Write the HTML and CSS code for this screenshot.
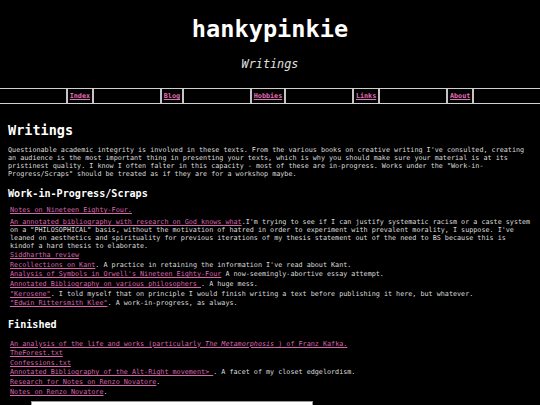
FILE: index.html
```html
<!DOCTYPE html>
<html lang="en">
<head>
<meta charset="utf-8">
<title>hankypinkie - Writings</title>
<link rel="stylesheet" href="styles.css">
</head>
<body>
<header class="site-header">
  <h1 class="site-title">hankypinkie</h1>
  <p class="site-subtitle">Writings</p>
</header>
<nav class="nav">
  <span class="nav-gap"></span>
  <span class="nav-cell"><a href="#">Index</a></span>
  <span class="nav-gap"></span>
  <span class="nav-cell"><a href="#">Blog</a></span>
  <span class="nav-gap"></span>
  <span class="nav-cell"><a href="#">Hobbies</a></span>
  <span class="nav-gap"></span>
  <span class="nav-cell"><a href="#">Links</a></span>
  <span class="nav-gap"></span>
  <span class="nav-cell"><a href="#">About</a></span>
  <span class="nav-gap"></span>
</nav>
<main class="content">
  <h2 class="page-title">Writings</h2>
  <p class="intro">Questionable academic integrity is involved in these texts. From the various books on creative writing I've consulted, creating an audience is the most important thing in presenting your texts, which is why you should make sure your material is at its pristinest quality. I know I often falter in this capacity - most of these are in-progress. Works under the "Work-in-Progress/Scraps" should be treated as if they are for a workshop maybe.</p>

  <h3 class="section-title">Work-in-Progress/Scraps</h3>
  <ul class="works">
    <li class="first"><a href="#">Notes on Nineteen Eighty-Four.</a></li>
    <li><a href="#">An annotated bibliography with research on God knows what</a>.I'm trying to see if I can justify systematic racism or a caste system on a "PHILOSOPHICAL" basis, without the motivation of hatred in order to experiment with prevalent morality, I suppose. I've leaned on aesthetics and spirituality for previous iterations of my thesis statement out of the need to BS because this is kindof a hard thesis to elaborate.</li>
    <li><a href="#">Siddhartha review</a></li>
    <li><a href="#">Recollections on Kant</a>. A practice in retaining the information I've read about Kant.</li>
    <li><a href="#">Analysis of Symbols in Orwell's Nineteen Eighty-Four</a> A now-seemingly-abortive essay attempt.</li>
    <li><a href="#">Annotated Bibliography on various philosophers </a>. A huge mess.</li>
    <li><a href="#">"Kerosene"</a>. I told myself that on principle I would finish writing a text before publishing it here, but whatever.</li>
    <li><a href="#">"Edwin Rittersmith Klee"</a>. A work-in-progress, as always.</li>
  </ul>

  <h3 class="section-title finished">Finished</h3>
  <ul class="works done">
    <li><a href="#">An analysis of the life and works (particularly <i>The Metamorphosis</i> ) of Franz Kafka.</a></li>
    <li><a href="#">TheForest.txt</a></li>
    <li><a href="#">Confessions.txt</a></li>
    <li><a href="#">Annotated Bibliography of the Alt-Right movement&gt; </a>. A facet of my closet edgelordism.</li>
    <li><a href="#">Research for Notes on Renzo Novatore</a>.</li>
    <li><a href="#">Notes on Renzo Novatore</a>.</li>
  </ul>
  <div class="frame"></div>
</main>
</body>
</html>
```
FILE: styles.css
```css
html, body {
  margin: 0;
  padding: 0;
  background: #000;
}

body {
  font-family: "DejaVu Sans Mono", "Liberation Mono", monospace;
  font-size: 6.75px;
  color: #dcdcdc;
}

a {
  color: #d865ad;
}

.site-header {
  text-align: center;
  padding-top: 16.4px;
}

.site-title {
  margin: 0;
  font-size: 23.6px;
  line-height: 27.5px;
  font-weight: bold;
  color: #fff;
}

.site-subtitle {
  margin: 14.45px 0 0;
  font-size: 11.8px;
  line-height: 13.7px;
  font-style: italic;
  color: #e0e0e0;
}

.nav {
  display: flex;
  margin-top: 16px;
  height: 16px;
  box-sizing: border-box;
  border-top: 1px solid #cfcfcf;
  border-bottom: 1px solid #cfcfcf;
}

.nav-gap {
  flex: 1;
}

.nav-cell {
  flex: none;
  display: flex;
  align-items: center;
  padding: 0 2px;
  border-left: 2px solid #c4c4c4;
  border-right: 2px solid #c4c4c4;
}

.nav-cell a {
  font-weight: bold;
  color: #e070b8;
  line-height: 8px;
}

.content {
  padding: 0 8px;
}

.page-title {
  margin: 18.5px 0 0;
  font-size: 13.5px;
  line-height: 15.7px;
  font-weight: bold;
  color: #fff;
}

.intro {
  margin: 9.2px 0 0;
  line-height: 7.87px;
}

.section-title {
  margin: 9px 0 0;
  font-size: 10.1px;
  line-height: 11.76px;
  font-weight: bold;
  color: #fff;
}

.section-title.finished {
  margin-top: 10.7px;
}

.works {
  list-style: none;
  margin: 7.7px 0 0;
  padding: 0 0 0 2px;
}

.works.done {
  margin-top: 10px;
}

.works li {
  line-height: 7.9px;
  margin-bottom: 1.7px;
}

.works li.first {
  margin-bottom: 3.7px;
}

.works li:last-child {
  margin-bottom: 0;
}

.frame {
  margin: 4.1px 0 0 23px;
  width: 282px;
  height: 40px;
  box-sizing: border-box;
  background: #fff;
  border: 1px solid #999;
}
```
